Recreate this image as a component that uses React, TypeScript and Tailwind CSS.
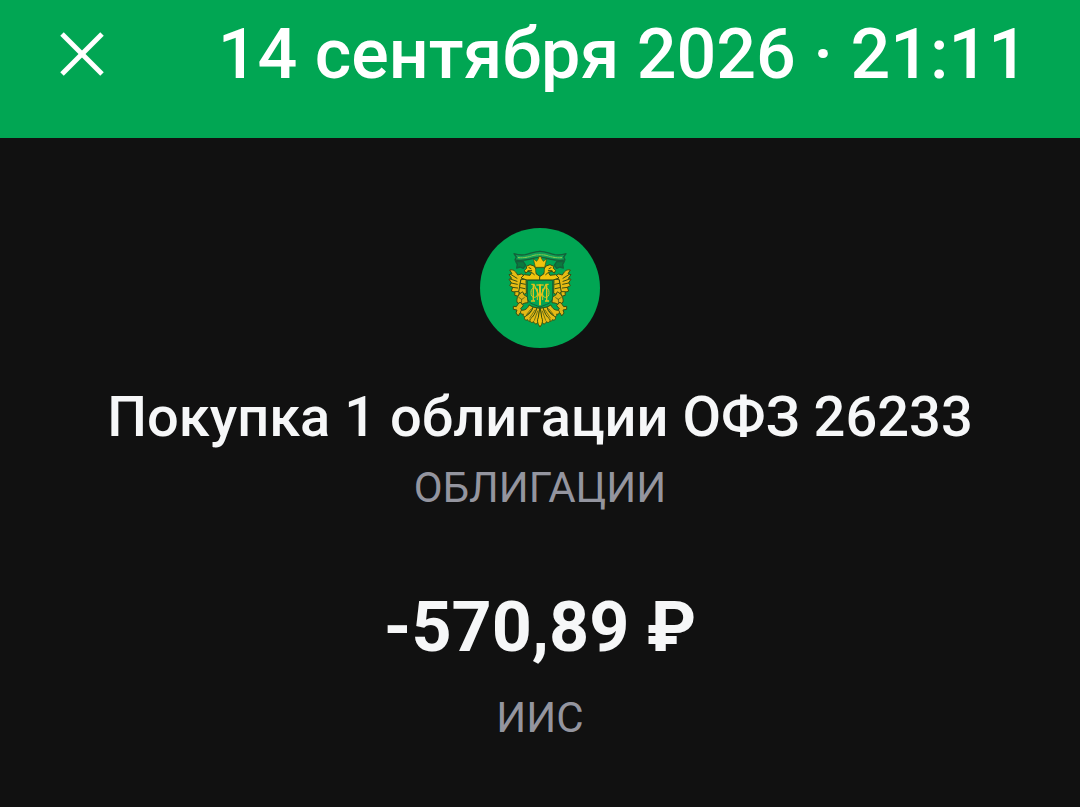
import { X } from "lucide-react";

const INK = "#3a4f12";

function EmblemHalf() {
  return (
    <g strokeLinejoin="round" strokeLinecap="round">
      {/* ribbon */}
      <path
        d="M210 100C194 100 181 107 166 110C154 112 144 111 132 107L139 117L135 126C151 129 166 127 181 123C192 119 201 118 210 118"
        fill="#12a055"
        stroke="#14603a"
        strokeWidth="4"
      />
      <path
        d="M145 119C158 120 170 118 182 115C192 111 201 110 210 110"
        fill="none"
        stroke="#8fcf4c"
        strokeWidth="3"
        strokeDasharray="4 3"
      />
      <path
        d="M137 130L142 139L140 150L150 147L160 151L167 142L160 131Z"
        fill="#0a7a3e"
        stroke="#14603a"
        strokeWidth="4"
      />
      {/* wing */}
      <g fill="#e6bb14" stroke={INK} strokeWidth="3">
        <path d="M172 178L152 186L146 235L134 232L135 223L124 219L128 208L119 203L124 194L117 184L125 181L117 170L126 167L119 156C132 153 138 162 143 171L154 168L172 178Z" />
        <path d="M122 169L141 181M121 183L141 190M124 195L142 199M127 208L143 210M134 221L146 221" />
        <path d="M154 184L168 184L169 226L157 231L146 222L150 200Z" />
        <path d="M152 196L166 199M151 209L165 212" />
      </g>
      {/* head and shoulder */}
      <path
        d="M210 186L171 186L153 180L163 170L180 172L185 163L174 160L167 165L163 157L170 151L169 145L180 140L192 144L200 156L198 167L210 175Z"
        fill="#f0c40d"
        stroke={INK}
        strokeWidth="3"
      />
      <path d="M177 149L183 152M174 158L185 158M187 165L193 170" stroke={INK} strokeWidth="3" />
      {/* lower leaves */}
      <g fill="#dcb51a" stroke={INK} strokeWidth="3">
        <path d="M157 222C145 227 139 240 141 253L153 260L165 255L174 254L173 237L164 232Z" />
        <path d="M146 238L155 244L163 239M155 244L154 257" fill="none" strokeWidth="2" />
        <path d="M151 253L160 263L152 272L158 280L149 286L145 294L138 285L141 276L130 274L130 265L139 266L143 260Z" />
      </g>
      {/* tail */}
      <g fill="#e6ba16" stroke={INK} strokeWidth="3">
        <path d="M177 262C172 273 165 277 154 277C149 282 153 291 160 288C158 294 163 299 169 294C176 288 184 279 190 269Z" />
        <path d="M189 268C186 281 176 290 166 295C160 300 165 310 173 305C175 312 181 311 184 305C190 297 197 286 201 271Z" />
        <path d="M201 270C196 285 190 296 181 303C177 310 184 317 191 311C193 319 201 320 204 312L209 272Z" />
        <path d="M184 272L170 289M195 276L179 300M203 279L193 307" fill="none" strokeWidth="2" />
      </g>
    </g>
  );
}

function Emblem() {
  return (
    <svg viewBox="30 30 360 360" className="size-[120px]" role="img" aria-label="ОФЗ 26233">
      <circle cx="210" cy="210" r="180" fill="#01a653" />
      <EmblemHalf />
      <g transform="matrix(-1 0 0 1 420 0)">
        <EmblemHalf />
      </g>
      {/* middle feather */}
      <path
        d="M210 266L205 298C200 308 204 316 205 319L210 327L215 319C216 316 220 308 215 298Z"
        fill="#f0c40d"
        stroke={INK}
        strokeWidth="3"
      />
      {/* small shield and crown */}
      <path
        d="M197 149H223V160C222 168 216 172 210 174C204 172 198 168 197 160Z"
        fill="#01a653"
        stroke={INK}
        strokeWidth="2"
      />
      <path
        d="M196 148L190 122L200 130L206 121L206 116H214V121L220 130L230 122L224 148Z"
        fill="#f0c40d"
        stroke={INK}
        strokeWidth="2"
      />
      {/* main shield */}
      <path
        d="M172 187H248V236C248 250 238 257 225 261L210 267L195 261C182 257 172 250 172 236Z"
        fill="#01a653"
        stroke="#14603a"
        strokeWidth="3"
      />
      {/* monogram */}
      <g fill="none" stroke="#e0c21a" strokeWidth="4">
        <path d="M199 201H221" />
        <path d="M210 199V262" strokeWidth="6" />
        <path d="M184 199H192L210 240L228 199H236" />
        <path d="M190 200V248M230 200V248" />
        <path d="M202 212V246M218 212V246" strokeWidth="3" />
        <ellipse cx="193" cy="224" rx="10" ry="14" strokeWidth="3" />
        <ellipse cx="227" cy="224" rx="10" ry="14" strokeWidth="3" />
        <path d="M183 249H195M225 249H237" />
      </g>
    </svg>
  );
}

export default function App() {
  return (
    <div className="min-h-screen bg-[#111111] font-['Roboto','Liberation_Sans',sans-serif] text-[#f6f7f8]">
      <header className="flex items-start justify-between bg-[#01a653] pt-2 pr-13 pb-[38px] pl-[42px] text-white">
        <button type="button" aria-label="Закрыть" className="mt-1.5">
          <X className="size-20" strokeWidth={1.5} strokeLinecap="butt" />
        </button>
        <h1 className="text-[70px] leading-[92px] font-medium whitespace-nowrap">
          14 сентября 2026 · 21:11
        </h1>
      </header>

      <main className="flex flex-col items-center pt-[90px] text-center">
        <Emblem />
        <h2 className="mt-8 text-[56px] leading-[74px] font-medium">
          Покупка 1 облигации ОФЗ 26233
        </h2>
        <p className="text-[42px] leading-[68px] text-[#94959f]">ОБЛИГАЦИИ</p>
        <p className="mt-16 text-[70px] leading-[82px] font-bold">-570,89 ₽</p>
        <p className="mt-4 text-[42px] leading-[68px] text-[#94959f]">ИИС</p>
      </main>
    </div>
  );
}
